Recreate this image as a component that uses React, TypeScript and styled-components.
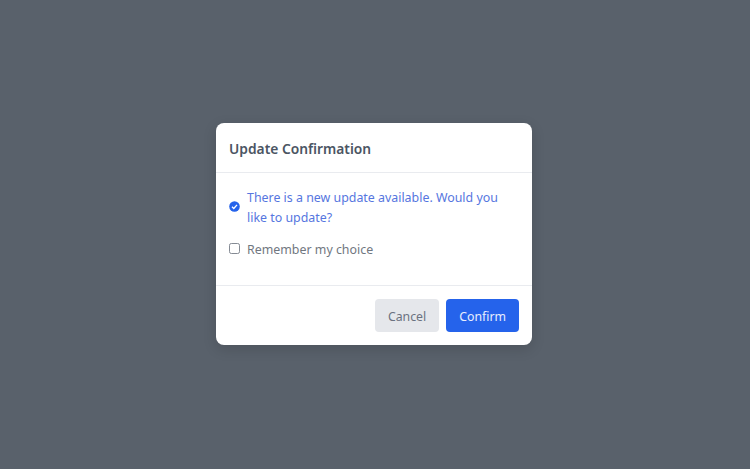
import styled, {createGlobalStyle} from 'styled-components';

const GlobalStyle = createGlobalStyle`
  html, body {
    margin: 0;
    height: 100%;
  }
  body {
    font-family: "Noto Sans", sans-serif;
  }
`;

const Overlay = styled.div`
  width: 750px;
  height: 469px;
  box-sizing: border-box;
  padding: 0 2px 1px 0;
  background: #59616b;
  display: flex;
  align-items: center;
  justify-content: center;
`;

const Dialog = styled.div`
  width: 316px;
  background: #fff;
  border-radius: 8px;
  box-shadow: 0 4px 14px rgba(0, 0, 0, 0.14);
  overflow: hidden;
`;

const Header = styled.div`
  height: 49px;
  padding: 0 13px;
  display: flex;
  align-items: center;
  border-bottom: 1px solid #e9ebef;
`;

const Title = styled.h2`
  margin: 1px 0 0;
  font-size: 13.8px;
  font-weight: 600;
  color: #4b5563;
`;

const Body = styled.div`
  height: 112px;
  padding: 14px 13px 0;
  display: flex;
  flex-direction: column;
  gap: 11px;
  box-sizing: border-box;
`;

const Row = styled.div<{$accent?: boolean}>`
  display: flex;
  align-items: center;
  gap: 7px;
  font-size: 12.4px;
  line-height: 20px;
  color: ${p => (p.$accent ? '#5676e0' : '#71777f')};
`;

const Label = styled.span`
  padding-top: 1px;
`;

const IconSlot = styled.span`
  width: 11px;
  height: 11px;
  margin-bottom: 2px;
  flex: none;
  display: flex;
`;

const Footer = styled.div`
  height: 59px;
  padding: 0 13px;
  display: flex;
  align-items: center;
  justify-content: flex-end;
  gap: 7px;
  border-top: 1px solid #e9ebef;
`;

const Button = styled.button<{$primary?: boolean}>`
  height: 33px;
  padding: 1px 13px 0;
  border: 0;
  border-radius: 4px;
  font-family: inherit;
  font-size: 12.3px;
  font-weight: 400;
  color: ${p => (p.$primary ? '#e8eefe' : '#6b7280')};
  background: ${p => (p.$primary ? '#2563eb' : '#e5e7eb')};
`;

function CheckCircle() {
  return (
    <svg viewBox="0 0 11 11" width="11" height="11">
      <circle cx="5.5" cy="5.5" r="5.3" fill="#2563eb" />
      <path d="M3 5.7 4.8 7.4 8 3.9" fill="none" stroke="#fff" strokeWidth="1.4" />
    </svg>
  );
}

function EmptyBox() {
  return (
    <svg viewBox="0 0 11 11" width="11" height="11">
      <rect x="0.5" y="0.5" width="10" height="10" rx="1.8" fill="#fff" stroke="#858b94" />
    </svg>
  );
}

export default function App() {
  return (
    <>
      <GlobalStyle />
      <Overlay>
        <Dialog>
          <Header>
            <Title>Update Confirmation</Title>
          </Header>
          <Body>
            <Row $accent>
              <IconSlot>
                <CheckCircle />
              </IconSlot>
              <Label>
                There is a new update available. Would you
                <br />
                like to update?
              </Label>
            </Row>
            <Row>
              <IconSlot>
                <EmptyBox />
              </IconSlot>
              <Label>Remember my choice</Label>
            </Row>
          </Body>
          <Footer>
            <Button>Cancel</Button>
            <Button $primary>Confirm</Button>
          </Footer>
        </Dialog>
      </Overlay>
    </>
  );
}
